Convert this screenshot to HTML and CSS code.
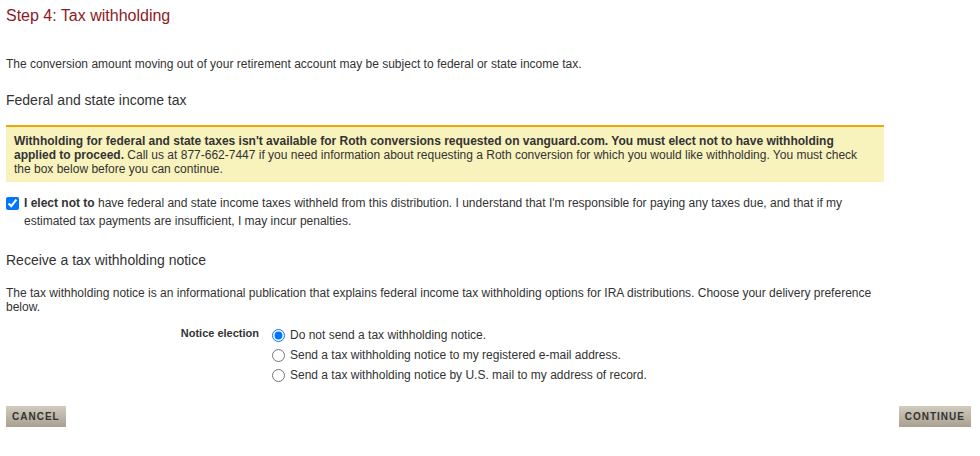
FILE: index.html
```html
<!DOCTYPE html>
<html lang="en">
<head>
    <meta charset="UTF-8">
    <meta name="viewport" content="width=device-width, initial-scale=1.0">
    <title>Tax withholding</title>
    <link rel="stylesheet" href="styles.css">
</head>
<body>
    <div class="page">
        <h1 class="step-title">Step 4: Tax withholding</h1>
        <p class="intro">The conversion amount moving out of your retirement account may be subject to federal or state income tax.</p>

        <h2 class="section-title first">Federal and state income tax</h2>
        <div class="alert">
            <b>Withholding for federal and state taxes isn't available for Roth conversions requested on vanguard.com. You must elect not to have withholding applied to proceed.</b> Call us at 877-662-7447 if you need information about requesting a Roth conversion for which you would like withholding. You must check the box below before you can continue.
        </div>
        <label class="elect">
            <input type="checkbox" checked>
            <span><b>I elect not to</b> have federal and state income taxes withheld from this distribution. I understand that I'm responsible for paying any taxes due, and that if my estimated tax payments are insufficient, I may incur penalties.</span>
        </label>

        <h2 class="section-title second">Receive a tax withholding notice</h2>
        <p class="notice-info">The tax withholding notice is an informational publication that explains federal income tax withholding options for IRA distributions. Choose your delivery preference below.</p>

        <div class="notice">
            <div class="notice-label">Notice election</div>
            <div class="notice-options">
                <label><input type="radio" name="notice" checked> Do not send a tax withholding notice.</label>
                <label><input type="radio" name="notice"> Send a tax withholding notice to my registered e-mail address.</label>
                <label><input type="radio" name="notice"> Send a tax withholding notice by U.S. mail to my address of record.</label>
            </div>
        </div>

        <div class="buttons">
            <button class="btn">CANCEL</button>
            <button class="btn">CONTINUE</button>
        </div>
    </div>
</body>
</html>
```

FILE: styles.css
```css
* {
    margin: 0;
    padding: 0;
    box-sizing: border-box;
}
body {
    font-family: "Liberation Sans", Arial, sans-serif;
    font-size: 12px;
    color: #333;
    background: #fff;
}
.page {
    width: 971px;
    padding: 6px 0 0 6px;
}

.step-title {
    font-size: 16px;
    font-weight: normal;
    line-height: 20px;
    color: #8c1a24;
}
.intro {
    margin-top: 31px;
    line-height: 14px;
}

.section-title {
    font-size: 14px;
    font-weight: normal;
    line-height: 18px;
    color: #333;
}
.section-title.first {
    margin-top: 20px;
}
.section-title.second {
    margin-top: 21px;
}

.alert {
    width: 878px;
    margin-top: 16px;
    padding: 7px 8px 6px;
    line-height: 14px;
    background: #f8f2bd;
    border-top: 2px solid #e9a80c;
}

.elect {
    display: flex;
    width: 878px;
    margin-top: 12px;
    line-height: 18px;
}
.elect input {
    flex: none;
    width: 13px;
    height: 13px;
    margin: 3px 5px 0 0;
}

.notice-info {
    width: 878px;
    margin-top: 17px;
    line-height: 14px;
}

.notice {
    display: flex;
    margin-top: 11px;
}
.notice-label {
    width: 253px;
    text-align: right;
    font-size: 11px;
    font-weight: bold;
    line-height: 16px;
}
.notice-options {
    margin-left: 13px;
}
.notice-options label {
    display: flex;
    align-items: center;
    height: 20px;
}
.notice-options input {
    width: 13px;
    height: 13px;
    margin: 0 5px 0 0;
}

.buttons {
    display: flex;
    justify-content: space-between;
    margin-top: 21px;
}
.btn {
    height: 21px;
    padding: 0 6px;
    border: none;
    font-family: "Liberation Sans", Arial, sans-serif;
    font-size: 10px;
    font-weight: bold;
    letter-spacing: 1px;
    color: #333;
    background: linear-gradient(#d2ccbe, #a8a090);
}
```
